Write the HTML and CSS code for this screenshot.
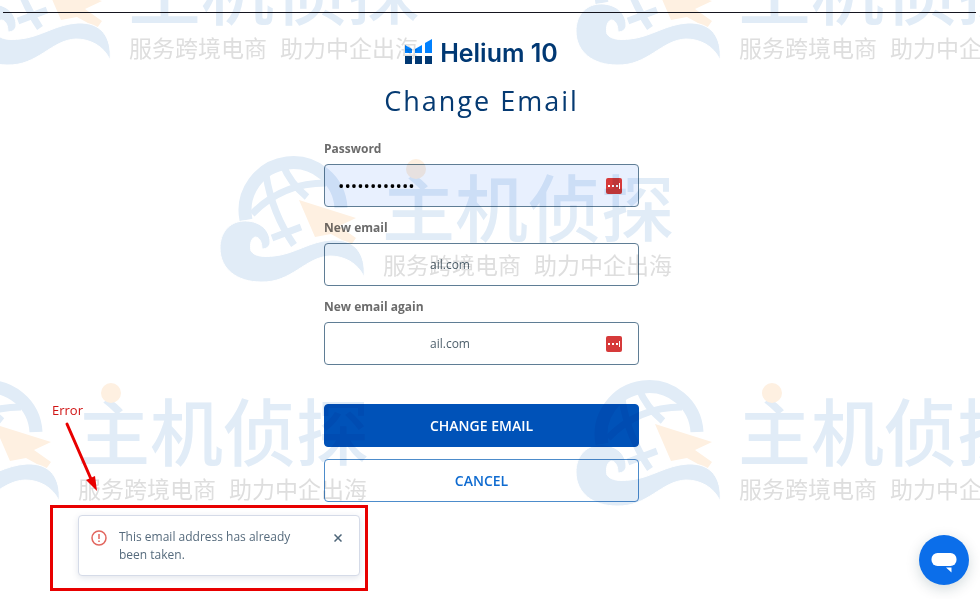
FILE: index.html
```html
<!DOCTYPE html>
<html lang="en">
<head>
  <meta charset="UTF-8">
  <meta name="viewport" content="width=device-width, initial-scale=1.0">
  <title>Change Email</title>
  <link rel="stylesheet" href="styles.css">
</head>
<body>
  <hr class="top-line">

  <main class="page">
    <div class="logo">
      <svg class="logo-icon" viewBox="0 0 27 26" aria-hidden="true">
        <path fill="#0081ff" d="M0 6l7 4v4H0zM10 10l7-4v8h-7zM20 4l7-4v14h-7z"/>
        <path fill="#003873" d="M0 17h7v8H0zM10 17h7v8h-7zM20 17h7v8h-7z"/>
      </svg>
      <span>Helium 10</span>
    </div>
    <h1>Change Email</h1>

    <form class="form">
      <label for="password">Password</label>
      <div class="field">
        <input class="filled" type="password" id="password" value="abcdefghijkl">
        <svg class="key" viewBox="0 0 16 16" aria-hidden="true"><rect width="16" height="16" rx="2" fill="#d63a3a"/><path fill="#fff" d="M2 7h2v2H2zM6 7h2v2H6zM10 7h2v2h-2zM13 5h1v6h-1z"/></svg>
      </div>

      <label for="email">New email</label>
      <div class="field">
        <input class="email" type="text" id="email" value="ail.com">
      </div>

      <label for="email2">New email again</label>
      <div class="field">
        <input class="email" type="text" id="email2" value="ail.com">
        <svg class="key" viewBox="0 0 16 16" aria-hidden="true"><rect width="16" height="16" rx="2" fill="#d63a3a"/><path fill="#fff" d="M2 7h2v2H2zM6 7h2v2H6zM10 7h2v2h-2zM13 5h1v6h-1z"/></svg>
      </div>

      <div class="actions">
        <button class="btn btn-primary" type="submit">CHANGE EMAIL</button>
        <button class="btn btn-outline" type="button">CANCEL</button>
      </div>
    </form>
  </main>

  <!-- watermarks -->
  <div class="marks" aria-hidden="true">
    <svg class="mark mark-1" viewBox="0 0 460 140">
      <g id="art">
        <g fill="none" stroke="#e1ecf7">
          <path stroke-width="13" d="M26 69A48 48 0 1 1 121 57"/>
          <path stroke-width="7" d="M32 63Q62 32 106 32M63 14Q70 32 87 46M46 24Q52 62 74 94M52 87L81 76"/>
        </g>
        <path fill="#fef0e1" d="M79 49l57 18-17 8 17 12-5 7-20-11-16 3z"/>
        <path fill="#e1ecf7" stroke="#fff" d="M0 97C0 82 9 71 23 70C38 69 50 78 50 91C50 95 47 98 42 98C42 92 40 86 35 86C30 88 30 96 31 100C35 106 45 106 54 105C75 103 90 90 112 89C135 88 146 103 144 126C138 112 124 105 110 105C85 106 72 132 41 131C17 131 0 118 0 97Z"/>
      </g>
      <text class="brand" x="162" y="85">主机侦探</text>
      <text class="tagline" x="163" y="123">服务跨境电商</text>
      <text class="tagline" x="314" y="123">助力中企出海</text>
      <circle cx="196" cy="18" r="10" fill="#fef0e1"/>
    </svg>
    <svg class="mark mark-2" viewBox="0 0 460 140">
      <use href="#art"/>
      <text class="brand" x="162" y="85">主机侦探</text>
      <text class="tagline" x="163" y="123">服务跨境电商</text>
      <text class="tagline" x="314" y="123">助力中企出海</text>
      <circle cx="196" cy="18" r="10" fill="#fef0e1"/>
    </svg>
    <svg class="mark mark-3" viewBox="0 0 460 140">
      <use href="#art"/>
      <text class="brand" x="162" y="85">主机侦探</text>
      <text class="tagline" x="163" y="123">服务跨境电商</text>
      <text class="tagline" x="314" y="123">助力中企出海</text>
      <circle cx="196" cy="18" r="10" fill="#fef0e1"/>
    </svg>
    <svg class="mark mark-4" viewBox="0 0 460 140">
      <use href="#art"/>
      <text class="brand" x="162" y="85">主机侦探</text>
      <text class="tagline" x="163" y="123">服务跨境电商</text>
      <text class="tagline" x="314" y="123">助力中企出海</text>
      <circle cx="196" cy="18" r="10" fill="#fef0e1"/>
    </svg>
    <svg class="mark mark-5" viewBox="0 0 460 140">
      <use href="#art"/>
      <text class="brand" x="162" y="85">主机侦探</text>
      <text class="tagline" x="163" y="123">服务跨境电商</text>
      <text class="tagline" x="314" y="123">助力中企出海</text>
      <circle cx="196" cy="18" r="10" fill="#fef0e1"/>
    </svg>
  </div>

  <div class="note">
    <span class="note-text">Error</span>
    <svg class="note-arrow" viewBox="0 0 36 72" aria-hidden="true">
      <path d="M3 3L27 58" stroke="#e80000" stroke-width="3" stroke-linecap="round"/>
      <path d="M22 59l9-4 2 15z" fill="#e80000"/>
    </svg>
    <div class="note-box">
      <div class="toast" role="alert">
        <svg class="toast-icon" viewBox="0 0 16 16" aria-hidden="true">
          <circle cx="8" cy="8" r="7" fill="none" stroke="#e2665f" stroke-width="1.5"/>
          <path d="M8 4v5M8 10.500v1.500" stroke="#e2665f" stroke-width="1.500"/>
        </svg>
        <p>This email address has already been taken.</p>
        <button class="close" type="button" aria-label="Close">
          <svg viewBox="0 0 8 8" aria-hidden="true"><path d="M0.500 0.500l7 7M7.500 0.500l-7 7" stroke="#4d6578" stroke-width="1.500"/></svg>
        </button>
      </div>
    </div>
  </div>

  <button class="chat" type="button" aria-label="Chat">
    <svg viewBox="0 0 26 20" aria-hidden="true"><rect width="25" height="13" x="0.500" rx="6" fill="#fff"/><path fill="#fff" d="M15 14.500h5.500v5z"/></svg>
  </button>
</body>
</html>
```

FILE: styles.css
```css
* {
  box-sizing: border-box;
}
body {
  position: relative;
  min-height: 100vh;
  margin: 0;
  padding-top: 12px;
  background: #fff;
  font-family: "Open Sans", "Noto Sans", sans-serif;
}
.top-line {
  height: 1px;
  margin: 0 4px 0 3px;
  border: none;
  background: #15151f;
}
.page {
  padding: 24px 17px 0 0;
}
.logo {
  display: flex;
  justify-content: center;
  align-items: center;
  gap: 8px;
  height: 32px;
  color: #003873;
  font-family: Inter, sans-serif;
  font-size: 25px;
  font-weight: 600;
}
.logo-icon {
  width: 27px;
  height: 26px;
  margin-bottom: 3px;
}
h1 {
  margin: 14px 0 0;
  color: #053a72;
  font-size: 27px;
  font-weight: 400;
  line-height: 36px;
  letter-spacing: 2px;
  text-align: center;
}
.form {
  width: 315px;
  max-width: 100%;
  margin: 22px auto 0;
}
label {
  display: block;
  height: 23px;
  color: #6b6b6b;
  font-size: 12px;
  font-weight: 700;
  line-height: 16px;
}
.field {
  position: relative;
  margin-bottom: 13px;
}
input {
  display: block;
  width: 100%;
  height: 43px;
  padding: 0 13px;
  border: 1px solid #5f7d95;
  border-radius: 4px;
  background: #fff;
  color: #4d5f6b;
  font-family: inherit;
  font-size: 12px;
}
.filled {
  background: #e8f0fe;
  color: #000;
  font-size: 17px;
}
.email {
  padding-left: 105px;
}
.key {
  position: absolute;
  top: 14px;
  right: 17px;
  width: 16px;
  height: 16px;
}
.actions {
  display: flex;
  flex-direction: column;
  gap: 12px;
  margin-top: 39px;
}
.btn {
  height: 43px;
  padding: 0 0 1px;
  border: 1px solid #0052b8;
  border-radius: 4px;
  font-family: inherit;
  font-size: 14px;
  font-weight: 600;
  cursor: pointer;
}
.btn-primary {
  background: #0052b8;
  color: #fff;
}
.btn-outline {
  border-color: #4d8ccb;
  background: #fff;
  color: #0f6bd0;
}

/* watermarks */
.marks {
  position: absolute;
  inset: 0;
  overflow: hidden;
  mix-blend-mode: multiply;
  pointer-events: none;
}
.mark {
  position: absolute;
  width: 460px;
  height: 140px;
}
.mark-1 {
  left: -34px;
  top: -66px;
}
.mark-2 {
  left: 576px;
  top: -66px;
}
.mark-3 {
  left: 220px;
  top: 151px;
}
.mark-4 {
  left: -85px;
  top: 375px;
}
.mark-5 {
  left: 576px;
  top: 375px;
}
.brand {
  fill: #e1ecf7;
  font-family: "Noto Sans CJK SC", sans-serif;
  font-size: 73px;
  font-weight: 500;
}
.tagline {
  fill: #dedede;
  font-family: "Noto Sans CJK SC", sans-serif;
  font-size: 23px;
}

/* error note */
.note {
  position: absolute;
  left: 50px;
  bottom: 8px;
  width: 318px;
}
.note-text {
  display: block;
  margin-left: 2px;
  color: #d01414;
  font-size: 13px;
  line-height: 18px;
}
.note-arrow {
  display: block;
  width: 36px;
  height: 72px;
  margin: 2px 0 12px 14px;
}
.note-box {
  padding: 7px 5px 12px 25px;
  border: 3px solid #e80000;
}
.toast {
  display: flex;
  align-items: flex-start;
  height: 61px;
  padding: 12px 17px 0 12px;
  border: 1px solid #d5dbe8;
  border-radius: 4px;
  background: #fff;
  box-shadow: 0 2px 6px rgba(60, 80, 130, 0.15);
}
.toast-icon {
  flex: none;
  width: 16px;
  height: 16px;
  margin: 2px 12px 0 0;
}
.toast p {
  flex: 1;
  margin: 0;
  padding-right: 32px;
  color: #566b7d;
  font-size: 12px;
  line-height: 18px;
}
.close {
  width: 8px;
  height: 8px;
  margin-top: 6px;
  padding: 0;
  border: none;
  background: none;
  cursor: pointer;
}
.close svg {
  display: block;
}
.chat {
  position: absolute;
  right: 11px;
  bottom: 14px;
  display: flex;
  justify-content: center;
  align-items: center;
  width: 50px;
  height: 50px;
  padding: 0;
  border: none;
  border-radius: 50%;
  background: #0b6eea;
  box-shadow: 0 4px 14px rgba(0, 50, 60, 0.18);
  cursor: pointer;
}
.chat svg {
  width: 26px;
  height: 20px;
  margin-top: 5px;
}
```
